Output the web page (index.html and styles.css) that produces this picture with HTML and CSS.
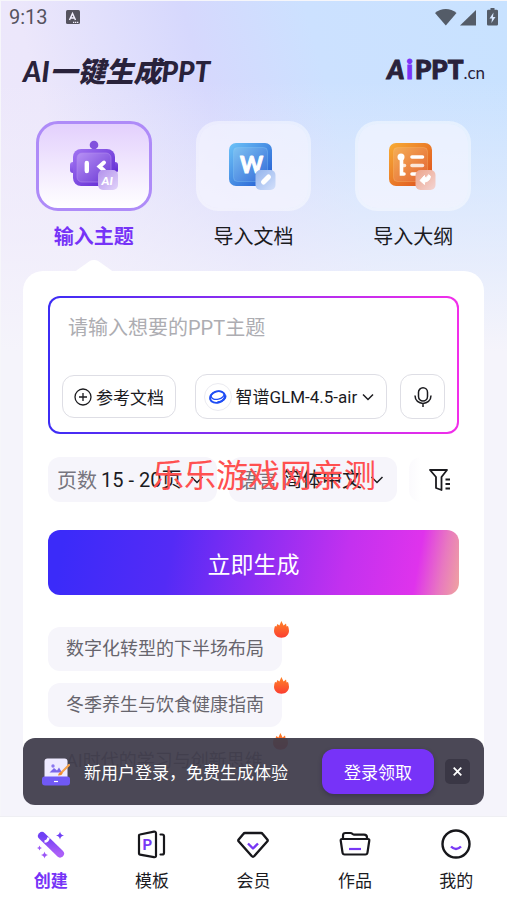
FILE: index.html
```html
<!DOCTYPE html>
<html lang="zh-CN">
<head>
<meta charset="utf-8">
<meta name="viewport" content="width=device-width, initial-scale=1">
<title>AI一键生成PPT</title>
<link rel="stylesheet" href="styles.css">
</head>
<body>
<main class="screen">
  <div class="status">
    <span class="clock">9:13</span>
    <svg class="keyboard" width="14" height="14" viewBox="0 0 14 14" aria-hidden="true">
      <rect width="14" height="14" rx="1.5" fill="#55535f"/>
      <path d="M3.5 10 6.500 3.500 9.500 10M4.600 8h3.800" fill="none" stroke="#f4f0ff" stroke-width="1.500"/>
      <path d="M7 12.300h5.500" stroke="#f4f0ff" stroke-width="1.200" stroke-dasharray="1.300 .7"/>
    </svg>
    <span class="signals">
      <svg width="64" height="18" viewBox="0 0 64 18" fill="#545c68" aria-hidden="true">
        <path d="M0 5C6-.4 15.500-.4 21.500 5L10.800 17.500Z"/>
        <path d="M41 2V17.500H25Z"/>
        <path d="M55.500 0h4v1.800h2.200q1.300 0 1.300 1.300v13.100q0 1.300-1.300 1.300h-8.400q-1.300 0-1.300-1.300V3.100q0-1.300 1.300-1.300h2.200Z"/>
        <path d="M58.500 4.500 54.500 10.500h2.500L56.400 15l4.100-6h-2.500Z" fill="#d5e6ff"/>
      </svg>
    </span>
  </div>

  <header class="header">
    <h1 class="title">AI一键生成PPT</h1>
    <div class="brand"><span class="brand-a">A</span><span class="brand-i">i</span>PPT<small>.cn</small></div>
  </header>

  <div class="modes">
    <button class="mode active" type="button">
      <span class="tile">
        <svg width="52" height="52" viewBox="0 0 52 52" aria-hidden="true">
          <defs>
            <linearGradient id="robot" x1="0" y1="0" x2="1" y2="1"><stop offset="0" stop-color="#a274f2"/><stop offset="1" stop-color="#5a24cf"/></linearGradient>
            <linearGradient id="face" x1="0" y1="0" x2="1" y2="1"><stop offset="0" stop-color="#b791f5"/><stop offset="1" stop-color="#6a37d4"/></linearGradient>
            <linearGradient id="robotBadge" x1="0" y1="0" x2="1" y2="1"><stop offset="0" stop-color="#b291ec"/><stop offset="1" stop-color="#e2d4fa"/></linearGradient>
          </defs>
          <circle cx="26" cy="5" r="4.300" fill="#8251dd"/>
          <rect x="2" y="22" width="48" height="11" rx="3" fill="url(#robot)"/>
          <rect x="5" y="9" width="42" height="37" rx="8" fill="url(#robot)"/>
          <rect x="9" y="13" width="34" height="29" rx="5" fill="url(#face)" stroke="#b08bef" stroke-opacity=".6"/>
          <path d="M18.800 23v8" stroke="#fff" stroke-width="4.400" stroke-linecap="round"/>
          <path d="M36 22.500 31.500 26.500l4.500 4" fill="none" stroke="#fff" stroke-width="4" stroke-linecap="round"/>
          <rect x="30" y="30" width="20" height="20" rx="5" fill="url(#robotBadge)"/>
          <text class="glyph-ai" x="33.500" y="44.500">AI</text>
        </svg>
      </span>
      <span class="mode-name">输入主题</span>
    </button>
    <button class="mode" type="button">
      <span class="tile">
        <svg width="52" height="52" viewBox="0 0 52 52" aria-hidden="true">
          <defs>
            <linearGradient id="word" x1="0" y1="0" x2="1" y2="1"><stop offset="0" stop-color="#6ec4f8"/><stop offset="1" stop-color="#1f55cf"/></linearGradient>
            <linearGradient id="wordIn" x1="0" y1="0" x2="1" y2="1"><stop offset="0" stop-color="#7ec2f2"/><stop offset="1" stop-color="#336bd9"/></linearGradient>
            <linearGradient id="wordBadge" x1="0" y1="0" x2="1" y2="1"><stop offset="0" stop-color="#93b4ec"/><stop offset="1" stop-color="#d4e0fb"/></linearGradient>
          </defs>
          <rect x="2" y="3" width="43" height="43" rx="7" fill="url(#word)"/>
          <rect x="6.500" y="7.500" width="34" height="34" rx="4" fill="url(#wordIn)" stroke="#8fd0fa" stroke-opacity=".3"/>
          <text class="glyph-w" x="24.500" y="32.500">W</text>
          <rect x="28.500" y="30" width="20" height="20" rx="5" fill="url(#wordBadge)"/>
          <path d="M36.500 42 41.500 37" stroke="#fff" stroke-width="5" stroke-linecap="round"/>
        </svg>
      </span>
      <span class="mode-name">导入文档</span>
    </button>
    <button class="mode" type="button">
      <span class="tile">
        <svg width="52" height="52" viewBox="0 0 52 52" aria-hidden="true">
          <defs>
            <linearGradient id="list" x1="0" y1="0" x2="1" y2="1"><stop offset="0" stop-color="#f8ad35"/><stop offset="1" stop-color="#dc4b1d"/></linearGradient>
            <linearGradient id="listIn" x1="0" y1="0" x2="1" y2="1"><stop offset="0" stop-color="#f5ae56"/><stop offset="1" stop-color="#e36332"/></linearGradient>
            <linearGradient id="listBadge" x1="0" y1="0" x2="1" y2="1"><stop offset="0" stop-color="#eda48a"/><stop offset="1" stop-color="#f3d5d4"/></linearGradient>
          </defs>
          <rect x="2" y="3" width="43" height="43" rx="7" fill="url(#list)"/>
          <rect x="6.500" y="7.500" width="34" height="34" rx="4" fill="url(#listIn)" stroke="#fbc47b" stroke-opacity=".3"/>
          <circle cx="14" cy="17" r="3.500" fill="#fff"/>
          <g fill="none" stroke="#fff" stroke-width="3.600" stroke-linecap="round">
            <path d="M14.500 17v17h2.500"/>
            <path d="M15 25.500h2.500M25 25.500h10.500" stroke-opacity=".8"/>
            <path d="M25 17h10.500M25 34h10.500"/>
          </g>
          <rect x="28.500" y="30" width="20" height="20" rx="5" fill="url(#listBadge)"/>
          <path d="M33 40.500 37.500 35.500v2.200q3.500-.2 4-3l2 1.500q-.5 5-6 6v2.300Z" fill="#fff" stroke="#fff" stroke-linejoin="round"/>
        </svg>
      </span>
      <span class="mode-name">导入大纲</span>
    </button>
  </div>

  <section class="panel">
    <form class="composer">
      <textarea class="prompt" aria-label="PPT主题" placeholder="请输入想要的PPT主题"></textarea>
      <div class="tools">
        <button class="tool reference" type="button">
          <svg width="18" height="18" viewBox="0 0 18 18" fill="none" stroke="#1b1b1f" stroke-width="1.300" aria-hidden="true"><circle cx="9" cy="9" r="8"/><path d="M9 5v8M5 9h8"/></svg>
          参考文档
        </button>
        <label class="tool model">
          <span class="model-logo">
            <svg width="18" height="16" viewBox="0 0 18 16" fill="none" stroke="#1f4df5" aria-hidden="true">
              <ellipse cx="8.500" cy="8" rx="7.600" ry="5.600" transform="rotate(-18 8.500 8)" stroke-width="1.900"/>
              <ellipse cx="8.600" cy="6.300" rx="6.600" ry="4" transform="rotate(-12 8.600 6.300)" stroke-width="1.300"/>
              <path d="M16.500 6.500c1 3-3 6.300-8 6.500" stroke-width="1.600"/>
            </svg>
          </span>
          <select aria-label="模型"><option>智谱GLM-4.5-air</option></select>
          <svg class="chevron" width="12" height="8" viewBox="0 0 12 8" aria-hidden="true"><path d="m1 1.500 5 5 5-5"/></svg>
        </label>
        <button class="tool mic" type="button" aria-label="语音输入">
          <svg width="18" height="20" viewBox="0 0 18 20" fill="none" stroke="#1b1b1f" stroke-width="1.500" aria-hidden="true"><rect x="4.500" y=".8" width="9" height="13.200" rx="4.500"/><path d="M1 8.500c0 10.500 16 10.500 16 0M9 16.500V20"/></svg>
        </button>
      </div>
    </form>

    <div class="options">
      <div class="option-list">
        <label class="option">页数
          <select><option>15 - 20页</option></select>
          <svg class="chevron" width="14" height="8" viewBox="0 0 14 8" aria-hidden="true"><path d="m1.500 1 5.500 5.500L12.500 1"/></svg>
        </label>
        <label class="option">语言
          <select><option>简体中文</option></select>
          <svg class="chevron" width="14" height="8" viewBox="0 0 14 8" aria-hidden="true"><path d="m1.500 1 5.500 5.500L12.500 1"/></svg>
        </label>
        <span class="option next"></span>
      </div>
      <button class="filter" type="button" aria-label="筛选">
        <svg width="22" height="22" viewBox="0 0 22 22" fill="none" stroke="#1b1b1f" stroke-width="1.800" stroke-linejoin="round" aria-hidden="true"><path d="M1 1h17L12.500 8v13L7 19V8Z"/><path d="M16.500 10.500H21M16.500 15H21M16.500 19.500H21"/></svg>
      </button>
      <span class="stamp">乐乐游戏网亲测</span>
    </div>

    <button class="generate" type="button">立即生成</button>

    <ul class="ideas">
      <li><a class="idea" href="#">数字化转型的下半场布局<svg class="fire" width="15" height="17" viewBox="0 0 15 17" aria-hidden="true"><use href="#flame"/></svg></a></li>
      <li><a class="idea" href="#">冬季养生与饮食健康指南<svg class="fire" width="15" height="17" viewBox="0 0 15 17" aria-hidden="true"><use href="#flame"/></svg></a></li>
      <li><a class="idea" href="#">AI时代的学习与创新思维<svg class="fire" width="15" height="17" viewBox="0 0 15 17" aria-hidden="true"><use href="#flame"/></svg></a></li>
    </ul>
  </section>

  <aside class="toast">
    <svg width="28" height="28" viewBox="0 0 28 28" aria-hidden="true">
      <rect x="2.500" y=".5" width="23" height="22" rx="3" fill="#eeeaff"/>
      <circle cx="11" cy="8" r="1.700" fill="#8b78ef"/>
      <path d="M7.500 14.500 12 10l3 2.500 2-3 3 5Z" fill="#7a66ea"/>
      <path d="M18 16 27 7" stroke="#f5a14c" stroke-width="2.200" stroke-linecap="round"/>
      <path d="M16 17.500q1-4 4.500-3 .5 3-4.500 3" fill="#f08a2f"/>
      <path d="M0 21q0-2.500 2.500-2.500h23q2.500 0 2.500 2.500v3.500q0 3-3 3H3q-3 0-3-3Z" fill="#7059f5"/>
      <path d="M12 23.500h4" stroke="#fff" stroke-width="1.200"/>
    </svg>
    <span class="toast-text">新用户登录，免费生成体验</span>
    <button class="login" type="button">登录领取</button>
    <button class="close" type="button" aria-label="关闭">
      <svg width="9" height="9" viewBox="0 0 9 9" stroke="#fff" stroke-width="1.800" aria-hidden="true"><path d="m.7.7 7.600 7.600M8.300.7.7 8.300"/></svg>
    </button>
  </aside>
</main>

<nav class="tabs">
  <a class="tab current" href="#">
    <svg width="32" height="32" viewBox="0 0 32 32" aria-hidden="true">
      <defs><linearGradient id="wand" x1="0" y1="0" x2="0" y2="1"><stop offset="0" stop-color="#7040f5"/><stop offset="1" stop-color="#ab5ff8"/></linearGradient></defs>
      <path d="M7 7 25 24.500" stroke="url(#wand)" stroke-width="8" stroke-linecap="round"/>
      <path d="M9.500 12.500q3.500 0 4-4" fill="none" stroke="#fff" stroke-width="2.500"/>
      <path d="M25 2.500q.5 3.500 4 4-3.500.5-4 4-.5-3.500-4-4 3.500-.5 4-4Z" fill="#7040f5"/>
      <path d="M4.500 16.500q.4 2.100 2.500 2.500-2.100.4-2.500 2.500Q4.100 19.400 2 19q2.100-.4 2.500-2.500ZM9.500 22.500q.5 3 3.500 3.500-3 .5-3.500 3.500Q9 26.500 6 26q3-.5 3.500-3.500Z" fill="#9b56f7"/>
    </svg>
    创建
  </a>
  <a class="tab" href="#">
    <svg width="32" height="32" viewBox="0 0 32 32" fill="none" stroke="#17171b" stroke-width="2.200" stroke-linejoin="round" stroke-linecap="round" aria-hidden="true">
      <path d="M4 5.500Q3 5.600 3 6.500v18q0 1 1 1.200l14 2.500q2 .3 2-1.500V4.500q0-2-2-1.800Z"/><path d="M24.500 5.500h1.700q1.800 0 1.800 1.800v16.400q0 1.800-1.800 1.800h-1.700"/>
      <text class="glyph-p" x="6.500" y="21">P</text>
    </svg>
    模板
  </a>
  <a class="tab" href="#">
    <svg width="32" height="32" viewBox="0 0 32 32" fill="none" stroke="#17171b" stroke-width="2.400" stroke-linejoin="round" aria-hidden="true">
      <path d="M8 4h16q1 0 1.700.9l4.600 5.600q.8 1-.1 2L17.300 27q-1.300 1.300-2.600 0L1.800 12.500q-.9-1-.1-2l4.600-5.600Q7 4 8 4Z"/><path d="m11 14.500 5 5 5-5" stroke="#7838f5"/>
    </svg>
    会员
  </a>
  <a class="tab" href="#">
    <svg width="32" height="32" viewBox="0 0 32 32" fill="none" stroke="#17171b" stroke-width="2.200" stroke-linejoin="round" aria-hidden="true">
      <path d="M4 10V6.500Q4 4 6.500 4h5q1 0 1.800.8T15 5.700h10q3 0 3 2.800V10"/><path d="M3 10h26q1.500 0 1.300 1.500L28.500 23.500q-.2 2-2.200 2H5.700q-2 0-2.200-2L1.700 11.500Q1.500 10 3 10Z"/><path d="M10 20h12" stroke="#7838f5"/>
    </svg>
    作品
  </a>
  <a class="tab" href="#">
    <svg width="32" height="32" viewBox="0 0 32 32" fill="none" stroke="#17171b" stroke-width="2.400" aria-hidden="true">
      <circle cx="16" cy="15" r="13.500"/><path d="M11 17.500q5 5 10 0" stroke="#7838f5"/>
    </svg>
    我的
  </a>
</nav>

<svg class="sprite" width="0" height="0" aria-hidden="true">
  <defs>
    <linearGradient id="heat" x1="0" y1="0" x2="0" y2="1"><stop offset="0" stop-color="#ff8428"/><stop offset="1" stop-color="#fb3d30"/></linearGradient>
    <path id="flame" d="M7.400 0 9.600 4.500 12 2.500 12.600 5.500 14 5Q15 7.500 15 9.800C15 14 11.600 16.800 7.500 16.800S0 14 0 9.800Q0 7.500 1 5L2.400 5.500 3.400 3 5.400 4.500Z" fill="url(#heat)"/>
  </defs>
</svg>
</body>
</html>
```

FILE: styles.css
```css
* { box-sizing: border-box; }

body {
  margin: 0;
  height: 100vh;
  display: flex;
  flex-direction: column;
  background: #f5f4fb;
  color: #1b1b1f;
  font-family: Roboto, "Noto Sans CJK SC", sans-serif;
  font-size: 20px;
}

button, select, textarea {
  margin: 0;
  padding: 0;
  border: 0;
  background: none;
  color: inherit;
  font: inherit;
}

select { appearance: none; outline: 0; }
a { color: inherit; text-decoration: none; }
svg { display: block; flex: none; }
.sprite { position: absolute; }

.screen {
  position: relative;
  flex: 1;
  min-height: 0;
  overflow: hidden;
  border-top: 1px solid #f6f6fa;
  border-left: 1px solid #f6f6fa;
  background:
    linear-gradient(to bottom, rgba(245, 244, 251, 0) 80px, rgba(244, 242, 251, .6) 240px, #f5f4fb 350px),
    linear-gradient(75deg, #efe8fb 0%, #ece7fb 32%, #d6d8fd 55%, #cce1ff 72%, #c8e2ff 100%);
}

.status {
  display: flex;
  align-items: center;
  height: 32px;
  padding: 0 8px;
  color: #55535f;
}
.keyboard { margin-left: 18px; }
.signals { margin-left: auto; }

.header {
  display: flex;
  justify-content: space-between;
  align-items: center;
  padding: 20px 22px 32px;
  line-height: 32px;
  color: #29223b;
}
.title {
  margin: 0;
  font: italic 900 28px/32px Lato, "Noto Sans CJK SC", sans-serif;
}
.brand {
  font: 900 26px/32px Lato, sans-serif;
  -webkit-text-stroke: 1px;
}
.brand-a { font-style: italic; }
.brand-i { color: #7a33f8; padding: 0 2px; }
.brand small {
  font-size: 17px;
  font-weight: 400;
  -webkit-text-stroke: 0;
}

.modes {
  display: grid;
  grid-template-columns: repeat(3, 1fr);
  gap: 44px;
  padding: 0 36px 0 35px;
}
.mode {
  position: relative;
  display: flex;
  flex-direction: column;
  gap: 12px;
  line-height: 28px;
  padding-bottom: 20px;
}
.tile {
  display: flex;
  align-items: center;
  justify-content: center;
  width: 100%;
  height: 90px;
  border: 3px solid rgba(255, 255, 255, .45);
  border-radius: 22px;
  background: rgba(248, 247, 255, .65);
  background-clip: padding-box;
}
.mode-name { width: 100%; text-align: center; }
.active { color: #7633f7; font-weight: 700; }
.active .tile {
  border-color: #ae8bf8;
  background: linear-gradient(#e3d0fd, #fff);
}
.active::after {
  content: "";
  position: absolute;
  left: 50%;
  bottom: -17px;
  width: 30px;
  height: 30px;
  margin-left: -15px;
  border-radius: 6px;
  background: #fff;
  transform: scaleY(.7) rotate(45deg);
}
.glyph-ai { font: italic 900 12px Lato, sans-serif; fill: #fff; }
.glyph-w {
  font: 700 22px Lato, sans-serif;
  fill: #fff;
  stroke: #fff;
  stroke-width: 1px;
  stroke-linejoin: round;
  text-anchor: middle;
}
.glyph-p { font: 700 15px Roboto, sans-serif; fill: #7838f5; stroke: none; }

.panel {
  position: relative;
  margin: 0 23px 0 22px;
  padding: 25px 25px 16px;
  border-radius: 20px;
  background: #fff;
}

.composer {
  border: 2px solid transparent;
  border-radius: 12px;
  background:
    linear-gradient(#fff, #fff) padding-box,
    linear-gradient(90deg, #3c2cf5, #f22eea) border-box;
}
.prompt {
  display: block;
  width: 100%;
  height: 76px;
  padding: 16px 18px 0;
  line-height: 28px;
  resize: none;
  outline: 0;
}
.prompt::placeholder { color: #adadb2; }
.tools {
  display: flex;
  align-items: center;
  justify-content: space-between;
  padding: 0 12px 13px;
  font-size: 17px;
}
.tool {
  display: flex;
  align-items: center;
  justify-content: center;
  height: 45px;
  border: 1px solid #dedee5;
  border-radius: 12px;
}
.reference { height: 43px; gap: 4px; padding: 0 11px; }
.model { gap: 4px; padding: 0 12px 0 8px; margin-left: 5px; }
.model-logo {
  display: flex;
  align-items: center;
  justify-content: center;
  width: 28px;
  height: 28px;
  border: 1px solid #ebebf1;
  border-radius: 50%;
}
.mic { width: 45px; }
.chevron { fill: none; stroke: #1b1b1f; stroke-width: 1.5; }

.options {
  position: relative;
  display: flex;
  align-items: center;
  margin-top: 23px;
}
.option-list {
  display: flex;
  flex: 1;
  gap: 12px;
  min-width: 0;
  overflow: hidden;
}
.option {
  display: flex;
  align-items: center;
  flex: none;
  gap: 4px;
  height: 45px;
  padding: 0 13px 0 9px;
  border-radius: 12px;
  background: #f6f5fb;
  color: #77757f;
}
.option select { color: #1b1b1f; }
.option .chevron { margin-left: 4px; }
.next { width: 60px; background: linear-gradient(90deg, #fbfafd, #fff 12px); }
.filter { padding: 0 8px; }
.stamp {
  position: absolute;
  left: 104px;
  top: -4px;
  color: #ff5050;
  font-size: 32px;
  line-height: 46px;
  white-space: nowrap;
}

.generate {
  display: block;
  width: 100%;
  height: 65px;
  margin-top: 28px;
  border-radius: 12px;
  background: linear-gradient(100deg, #3b2bf9 4%, #542bf6 30%, #8a2df2 50%, #c331ef 72%, #df33ec 89%, #e878c0 95%, #efa49f 100%);
  color: #fff;
  font-size: 23px;
}

.ideas {
  display: flex;
  flex-direction: column;
  align-items: flex-start;
  gap: 12px;
  margin: 32px 0 0;
  padding: 0;
  list-style: none;
}
.idea {
  position: relative;
  display: block;
  padding: 0 18px;
  border-radius: 12px;
  background: #f6f5fb;
  color: #67656d;
  font-size: 18px;
  line-height: 44px;
}
.fire { position: absolute; top: -6px; right: -7px; }

.toast {
  position: absolute;
  left: 22px;
  right: 23px;
  bottom: 11px;
  display: flex;
  align-items: center;
  height: 67px;
  padding: 0 14px 0 19px;
  border-radius: 12px;
  background: rgba(64, 61, 75, .94);
  color: #fff;
  font-size: 17px;
}
.toast-text { margin-left: 14px; }
.login {
  height: 45px;
  margin-left: auto;
  padding: 0 22px;
  border-radius: 12px;
  background: #7733f8;
  box-shadow: 0 2px 4px rgba(30, 20, 60, .35);
}
.close {
  display: flex;
  align-items: center;
  justify-content: center;
  width: 25px;
  height: 25px;
  margin-left: 11px;
  border-radius: 5px;
  background: #3a3745;
}

.tabs {
  display: grid;
  grid-template-columns: repeat(5, 1fr);
  padding: 12px 0 8px;
  border-top: 1px solid #efeff3;
  background: #fff;
  font-size: 17px;
  line-height: 24px;
}
.tab {
  display: flex;
  flex-direction: column;
  align-items: center;
  gap: 8px;
}
.current { color: #7633f7; font-weight: 700; }
```
